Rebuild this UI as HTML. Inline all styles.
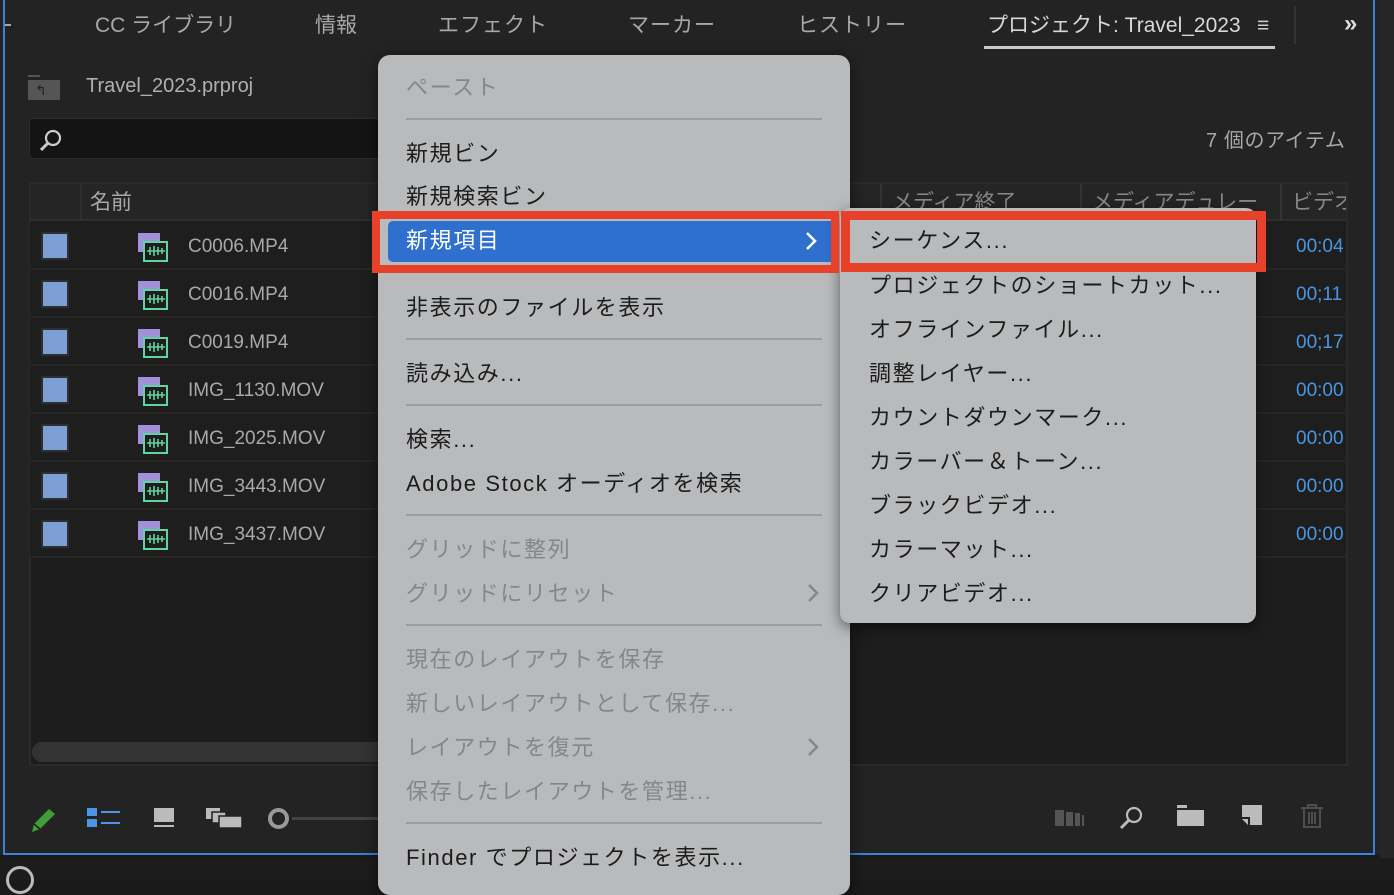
<!DOCTYPE html>
<html><head><meta charset="utf-8"><style>
*{margin:0;padding:0;box-sizing:border-box}
body{width:1394px;height:880px;overflow:hidden;background:#1a1a1a;font-family:"Liberation Sans","Noto Sans CJK JP",sans-serif;position:relative}
.a{position:absolute;white-space:nowrap}
.t{font-size:21px;line-height:30px;color:#a8a8a8}
.m{font-size:22px;line-height:30px;color:#1c1c1c;letter-spacing:1.6px}
.d{color:#858688}
.sep{position:absolute;left:28px;width:416px;height:2px;background:#9d9ea0}
.row{position:absolute;left:30px;width:1316px;height:48px;border-bottom:2px solid #262626;background:#1e1e1e}
.cb{position:absolute;left:11px;top:10px;width:28px;height:28px;background:#7d9fd6;border:2px solid #2e2e2e}
.ic{position:absolute;left:108px;top:11px}
.nm{position:absolute;left:158px;top:10px;font-size:19px;line-height:30px;color:#a9a9a9}
.tc{position:absolute;left:1266px;top:10px;font-size:19px;line-height:30px;color:#4a95e0}
</style></head><body>
<div class="a" style="left:0;top:0;width:1394px;height:855px;background:#232323"></div>
<div class="a" style="left:3px;top:0;width:1372px;height:855px;border:2px solid #3d7fdc;border-top:none"></div>
<div class="a" style="left:1380px;top:0;width:14px;height:858px;background:#262626"></div>
<div class="a" style="left:0;top:858px;width:1394px;height:22px;background:#1c1c1c"></div>
<div class="a" style="left:6px;top:866px;width:28px;height:28px;border:3px solid #bbb;border-radius:50%"></div>
<!-- tabs -->
<div class="a t" style="left:95px;top:11px">CC ライブラリ</div>
<div class="a t" style="left:315px;top:11px">情報</div>
<div class="a t" style="left:438px;top:11px;letter-spacing:1px">エフェクト</div>
<div class="a t" style="left:628px;top:11px;letter-spacing:1px">マーカー</div>
<div class="a t" style="left:797px;top:11px;letter-spacing:1px">ヒストリー</div>
<div class="a t" style="left:987px;top:11px;color:#d8d8d8">プロジェクト: Travel_2023</div>
<div class="a t" style="left:1257px;top:11px;color:#d0d0d0">≡</div>
<div class="a" style="left:984px;top:46px;width:291px;height:3px;background:#c8c8c8"></div>
<div class="a" style="left:1294px;top:6px;width:2px;height:38px;background:#333"></div>
<div class="a t" style="left:1344px;top:9px;color:#ddd;font-weight:bold;font-size:24px">»</div>
<div class="a" style="left:5px;top:24px;width:6px;height:2px;background:#aaa"></div>
<!-- project line -->
<div class="a" style="left:28px;top:80px;width:32px;height:20px;background:#555"></div>
<div class="a" style="left:28px;top:75px;width:12px;height:2px;background:#555"></div>
<div class="a" style="left:35px;top:82px;font-size:14px;color:#222;line-height:16px">↰</div>
<div class="a" style="left:86px;top:71px;font-size:20px;line-height:30px;color:#b0b0b0">Travel_2023.prproj</div>
<div class="a" style="left:29px;top:118px;width:360px;height:41px;background:#141414;border:1px solid #2c2c2c;border-radius:4px"></div>
<svg class="a" style="left:38px;top:127px" width="26" height="26"><circle cx="15" cy="11" r="7" stroke="#ccc" stroke-width="2.2" fill="none"/><line x1="10" y1="16" x2="3" y2="23" stroke="#ccc" stroke-width="3"/></svg>
<div class="a t" style="left:1206px;top:126px;font-size:20px;letter-spacing:.6px">7 個のアイテム</div>
<!-- table -->
<div class="a" style="left:29px;top:182px;width:1319px;height:584px;background:#1d1d1d;border:2px solid #2a2a2a"></div>
<div class="a" style="left:31px;top:184px;width:1315px;height:37px;background:#252525;border-bottom:2px solid #2e2e2e"></div>
<div class="a" style="left:80px;top:184px;width:2px;height:37px;background:#2e2e2e"></div>
<div class="a" style="left:880px;top:184px;width:2px;height:37px;background:#333"></div>
<div class="a" style="left:1080px;top:184px;width:2px;height:37px;background:#333"></div>
<div class="a" style="left:1280px;top:184px;width:2px;height:37px;background:#333"></div>
<div class="a t" style="left:90px;top:188px">名前</div>
<div class="a t" style="left:892px;top:188px;color:#888">メディア終了</div>
<div class="a t" style="left:1092px;top:188px;color:#888">メディアデュレー</div>
<div class="a t" style="left:1292px;top:188px;color:#888;width:54px;overflow:hidden">ビデオ</div>

<div class="row" style="top:222px"><div class="cb"></div><svg class="ic" width="32" height="30"><rect x="0" y="0" width="22" height="19" fill="#a48fdb"/><rect x="6" y="9" width="23" height="19" fill="#1e1e1e" stroke="#5fd3a0" stroke-width="2"/><path d="M9 18h18M12 14v8M16 13v10M20 14v8M24 15v6" stroke="#5fd3a0" stroke-width="1.6"/></svg><div class="nm">C0006.MP4</div><div class="tc">00:04</div></div>
<div class="row" style="top:270px"><div class="cb"></div><svg class="ic" width="32" height="30"><rect x="0" y="0" width="22" height="19" fill="#a48fdb"/><rect x="6" y="9" width="23" height="19" fill="#1e1e1e" stroke="#5fd3a0" stroke-width="2"/><path d="M9 18h18M12 14v8M16 13v10M20 14v8M24 15v6" stroke="#5fd3a0" stroke-width="1.6"/></svg><div class="nm">C0016.MP4</div><div class="tc">00;11</div></div>
<div class="row" style="top:318px"><div class="cb"></div><svg class="ic" width="32" height="30"><rect x="0" y="0" width="22" height="19" fill="#a48fdb"/><rect x="6" y="9" width="23" height="19" fill="#1e1e1e" stroke="#5fd3a0" stroke-width="2"/><path d="M9 18h18M12 14v8M16 13v10M20 14v8M24 15v6" stroke="#5fd3a0" stroke-width="1.6"/></svg><div class="nm">C0019.MP4</div><div class="tc">00;17</div></div>
<div class="row" style="top:366px"><div class="cb"></div><svg class="ic" width="32" height="30"><rect x="0" y="0" width="22" height="19" fill="#a48fdb"/><rect x="6" y="9" width="23" height="19" fill="#1e1e1e" stroke="#5fd3a0" stroke-width="2"/><path d="M9 18h18M12 14v8M16 13v10M20 14v8M24 15v6" stroke="#5fd3a0" stroke-width="1.6"/></svg><div class="nm">IMG_1130.MOV</div><div class="tc">00:00</div></div>
<div class="row" style="top:414px"><div class="cb"></div><svg class="ic" width="32" height="30"><rect x="0" y="0" width="22" height="19" fill="#a48fdb"/><rect x="6" y="9" width="23" height="19" fill="#1e1e1e" stroke="#5fd3a0" stroke-width="2"/><path d="M9 18h18M12 14v8M16 13v10M20 14v8M24 15v6" stroke="#5fd3a0" stroke-width="1.6"/></svg><div class="nm">IMG_2025.MOV</div><div class="tc">00:00</div></div>
<div class="row" style="top:462px"><div class="cb"></div><svg class="ic" width="32" height="30"><rect x="0" y="0" width="22" height="19" fill="#a48fdb"/><rect x="6" y="9" width="23" height="19" fill="#1e1e1e" stroke="#5fd3a0" stroke-width="2"/><path d="M9 18h18M12 14v8M16 13v10M20 14v8M24 15v6" stroke="#5fd3a0" stroke-width="1.6"/></svg><div class="nm">IMG_3443.MOV</div><div class="tc">00:00</div></div>
<div class="row" style="top:510px"><div class="cb"></div><svg class="ic" width="32" height="30"><rect x="0" y="0" width="22" height="19" fill="#a48fdb"/><rect x="6" y="9" width="23" height="19" fill="#1e1e1e" stroke="#5fd3a0" stroke-width="2"/><path d="M9 18h18M12 14v8M16 13v10M20 14v8M24 15v6" stroke="#5fd3a0" stroke-width="1.6"/></svg><div class="nm">IMG_3437.MOV</div><div class="tc">00:00</div></div>
<div class="a" style="left:32px;top:742px;width:360px;height:20px;background:#333;border-radius:10px"></div>
<!-- bottom toolbar -->
<svg class="a" style="left:28px;top:802px" width="32" height="32"><path d="M4 30l2-8L21 7l6 5-15 15z" fill="#3f9e3a"/><path d="M6 22l6 5" stroke="#1e1e1e" stroke-width="1.5"/></svg>
<svg class="a" style="left:87px;top:806px" width="36" height="24"><rect x="0" y="2" width="10" height="8" fill="#4a95e8"/><rect x="0" y="13" width="10" height="8" fill="#4a95e8"/><rect x="14" y="5" width="19" height="2" fill="#4a95e8"/><rect x="14" y="16" width="19" height="2" fill="#4a95e8"/></svg>
<svg class="a" style="left:153px;top:807px" width="24" height="22"><rect x="1" y="1" width="20" height="14" fill="#bbb"/><rect x="1" y="18" width="20" height="2" fill="#bbb"/></svg>
<svg class="a" style="left:205px;top:807px" width="40" height="24"><rect x="1" y="1" width="14" height="11" fill="#bbb"/><rect x="7" y="5" width="14" height="11" fill="#bbb" stroke="#232323" stroke-width="1.5"/><rect x="14" y="9" width="23" height="12" fill="#bbb" stroke="#232323" stroke-width="1.5"/></svg>
<div class="a" style="left:268px;top:808px;width:21px;height:21px;border:4px solid #999;border-radius:50%"></div>
<div class="a" style="left:292px;top:817px;width:90px;height:3px;background:#444"></div>
<svg class="a" style="left:1055px;top:808px" width="34" height="20"><rect x="0" y="2" width="9" height="16" fill="#555"/><rect x="11" y="4" width="7" height="14" fill="#555"/><rect x="20" y="5" width="5" height="13" fill="#555"/><rect x="27" y="7" width="2" height="11" fill="#555"/></svg>
<svg class="a" style="left:1118px;top:804px" width="28" height="28"><circle cx="16" cy="11" r="7" stroke="#bbb" stroke-width="2.2" fill="none"/><line x1="11" y1="16" x2="3" y2="24" stroke="#bbb" stroke-width="3"/></svg>
<svg class="a" style="left:1177px;top:805px" width="28" height="22"><rect x="0" y="0" width="10" height="3" fill="#bbb"/><rect x="0" y="5" width="27" height="16" fill="#bbb"/></svg>
<svg class="a" style="left:1240px;top:805px" width="24" height="24"><path d="M2 0h20v20h-12v-8h-8z" fill="#bbb"/><path d="M2 14h6v6z" fill="#bbb"/></svg>
<svg class="a" style="left:1300px;top:803px" width="24" height="26"><path d="M1 5h22M8 5V2h8v3M4 5v19h16V5M9 9v12M12 9v12M15 9v12" stroke="#4e4e4e" stroke-width="2" fill="none"/></svg>
<!-- main menu -->
<div class="a" style="left:378px;top:55px;width:472px;height:840px;background:#b9babc;border-radius:12px;box-shadow:0 4px 16px rgba(0,0,0,.5)"></div>
<div class="a" style="left:378px;top:55px;width:472px;height:840px">
<div class="a m d" style="left:28px;top:18px">ペースト</div>
<div class="sep" style="top:63px"></div>
<div class="a m" style="left:28px;top:84px">新規ビン</div>
<div class="a m" style="left:28px;top:127px">新規検索ビン</div>
<div class="a" style="left:10px;top:166px;width:449px;height:41px;background:#2f6fce;border-radius:5px"></div>
<div class="a m" style="left:28px;top:171px;color:#fff">新規項目</div>
<svg class="a" style="left:426px;top:176px" width="14" height="20"><path d="M3 2l8 8-8 8" stroke="#fff" stroke-width="2.6" fill="none"/></svg>
<div class="a m" style="left:28px;top:238px">非表示のファイルを表示</div>
<div class="sep" style="top:283px"></div>
<div class="a m" style="left:28px;top:304px">読み込み...</div>
<div class="sep" style="top:349px"></div>
<div class="a m" style="left:28px;top:370px">検索...</div>
<div class="a m" style="left:28px;top:414px">Adobe Stock オーディオを検索</div>
<div class="sep" style="top:459px"></div>
<div class="a m d" style="left:28px;top:480px">グリッドに整列</div>
<div class="a m d" style="left:28px;top:524px">グリッドにリセット</div>
<svg class="a" style="left:428px;top:528px" width="14" height="20"><path d="M3 2l8 8-8 8" stroke="#858688" stroke-width="2.4" fill="none"/></svg>
<div class="sep" style="top:569px"></div>
<div class="a m d" style="left:28px;top:590px">現在のレイアウトを保存</div>
<div class="a m d" style="left:28px;top:634px">新しいレイアウトとして保存...</div>
<div class="a m d" style="left:28px;top:678px">レイアウトを復元</div>
<svg class="a" style="left:428px;top:682px" width="14" height="20"><path d="M3 2l8 8-8 8" stroke="#858688" stroke-width="2.4" fill="none"/></svg>
<div class="a m d" style="left:28px;top:722px">保存したレイアウトを管理...</div>
<div class="sep" style="top:767px"></div>
<div class="a m" style="left:28px;top:788px">Finder でプロジェクトを表示...</div>
</div>
<!-- submenu -->
<div class="a" style="left:840px;top:208px;width:416px;height:415px;background:#b9babc;border-radius:10px;box-shadow:0 4px 14px rgba(0,0,0,.5)">
<div class="a m" style="left:29px;top:18px">シーケンス...</div>
<div class="a m" style="left:29px;top:63px">プロジェクトのショートカット...</div>
<div class="a m" style="left:29px;top:107px">オフラインファイル...</div>
<div class="a m" style="left:29px;top:151px">調整レイヤー...</div>
<div class="a m" style="left:29px;top:195px">カウントダウンマーク...</div>
<div class="a m" style="left:29px;top:239px">カラーバー＆トーン...</div>
<div class="a m" style="left:29px;top:283px">ブラックビデオ...</div>
<div class="a m" style="left:29px;top:327px">カラーマット...</div>
<div class="a m" style="left:29px;top:371px">クリアビデオ...</div>
</div>
<!-- red outlines -->
<div class="a" style="left:372px;top:211px;width:467px;height:62px;border:8px solid #e8412a"></div>
<div class="a" style="left:841px;top:211px;width:425px;height:61px;border:9px solid #e8412a"></div>
</body></html>
